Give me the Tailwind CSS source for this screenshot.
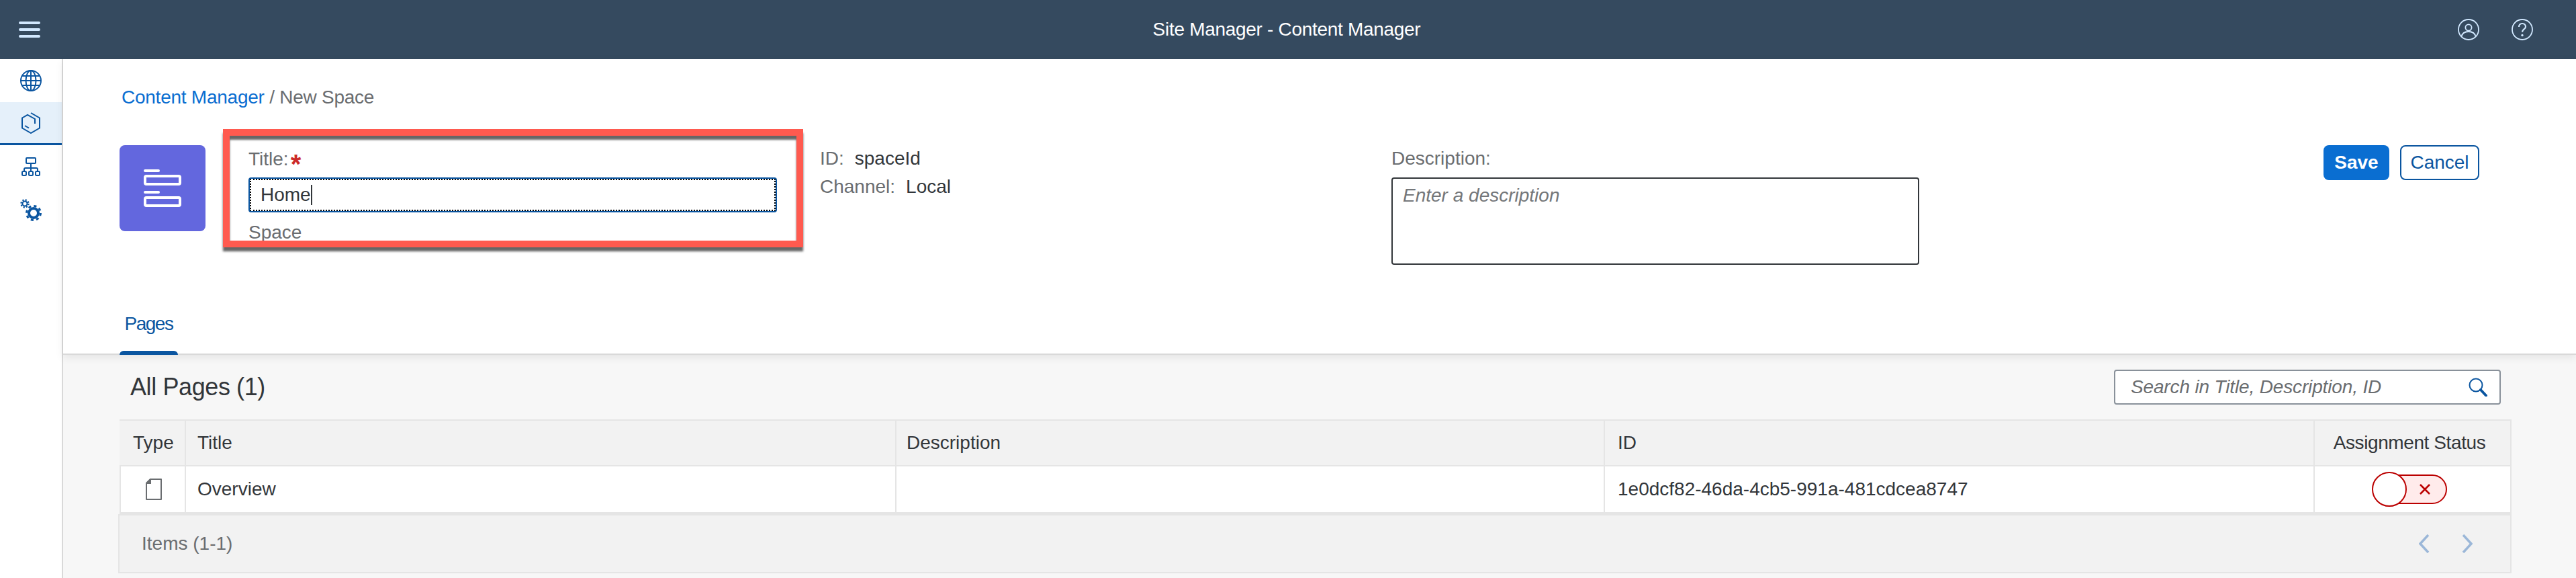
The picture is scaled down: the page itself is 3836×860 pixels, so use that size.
<!DOCTYPE html>
<html lang="en">
<head>
  <meta charset="UTF-8" />
  <title>Site Manager - Content Manager</title>
  <script src="https://cdn.jsdelivr.net/npm/@tailwindcss/browser@4"></script>
</head>
<body class="h-[860px] overflow-hidden bg-white text-[28px] leading-[36px] text-[#32363a] font-['Liberation_Sans',sans-serif]">

  <!-- shell bar -->
  <header class="h-[88px] bg-[#354a5f] flex items-center justify-between pl-[28px] pr-[64px] text-white">
    <div class="flex flex-col gap-[6px] w-[32px]">
      <span class="h-[4px] rounded-full bg-[#d1e8ff]"></span>
      <span class="h-[4px] rounded-full bg-[#d1e8ff]"></span>
      <span class="h-[4px] rounded-full bg-[#d1e8ff]"></span>
    </div>
    <div class="pl-[112px] tracking-[-0.3px]">Site Manager - Content Manager</div>
    <div class="flex gap-[48px] text-[#d1e8ff]">
      <svg class="w-[32px] h-[32px]" viewBox="0 0 32 32" fill="none" stroke="currentColor" stroke-width="1.8">
        <circle cx="16" cy="16" r="15"/>
        <circle cx="16" cy="13" r="4.6"/>
        <path d="M5.5 26.5c1-5 5-7.5 10.500-7.500s9.500 2.500 10.500 7.500"/>
      </svg>
      <svg class="w-[32px] h-[32px]" viewBox="0 0 32 32" fill="none" stroke="currentColor" stroke-width="1.8">
        <circle cx="16" cy="16" r="15"/>
        <path d="M11 12c0-3 2.200-5 5-5s5 2 5 4.700c0 3.800-5 3.800-5 8" stroke-width="2.200"/>
        <circle cx="16" cy="24.500" r="1.700" fill="currentColor" stroke="none"/>
      </svg>
    </div>
  </header>

  <div class="flex h-[772px]">
    <!-- side navigation -->
    <aside class="w-[94px] shrink-0 border-r-2 border-[#d9d9d9] text-[#0a55a0]">
      <div class="h-[64px] flex items-center justify-center">
        <svg class="w-[32px] h-[32px]" viewBox="0 0 32 32" fill="none" stroke="currentColor" stroke-width="2">
          <circle cx="16" cy="16" r="15"/>
          <ellipse cx="16" cy="16" rx="7.500" ry="15"/>
          <path d="M16 1v30M3 9h26M3 23h26M1 16h30"/>
        </svg>
      </div>
      <div class="h-[64px] flex items-center justify-center bg-[#e5f0fa] border-b-[3px] border-[#0a55a0]">
        <svg class="w-[28px] h-[32px]" viewBox="0 0 28 32" fill="none" stroke="currentColor" stroke-width="2">
          <path d="M14 1l13 7.500v15L14 31 1 23.500v-15l8-4.700 11 6.200v7"/>
          <path d="M5 20l6 3.500"/>
        </svg>
      </div>
      <div class="h-[64px] flex items-center justify-center">
        <svg class="w-[28px] h-[28px]" viewBox="0 0 28 28" fill="none" stroke="currentColor" stroke-width="2">
          <rect x="7" y="1" width="14" height="8" rx="1"/>
          <path d="M14 9v12M4 21v-3q0-2 2-2h16q2 0 2 2v3"/>
          <rect x="1" y="21" width="6" height="6" rx="1.500"/>
          <rect x="11" y="21" width="6" height="6" rx="1.500"/>
          <rect x="21" y="21" width="6" height="6" rx="1.500"/>
        </svg>
      </div>
      <div class="h-[64px] flex items-center justify-center">
        <svg class="w-[32px] h-[34px]" viewBox="0 0 32 34" fill="none" stroke="currentColor">
          <circle cx="20" cy="22" r="7" stroke-width="4"/>
          <circle cx="20" cy="22" r="10.500" stroke-width="3" stroke-dasharray="4.120 4.130"/>
          <circle cx="7" cy="8" r="3.500" stroke-width="2"/>
          <circle cx="7" cy="8" r="5.500" stroke-width="2.400" stroke-dasharray="2.160 2.160"/>
        </svg>
      </div>
    </aside>

    <main class="flex-1 flex flex-col min-w-0">
      <!-- object page header -->
      <section class="relative z-10 h-[440px] shrink-0 flex flex-col pl-[84px] pr-[144px] bg-white shadow-[inset_0_-2px_0_#d9d9d9,0_4px_12px_rgba(0,0,0,0.08)]">
        <nav class="pt-[39px] pl-[3px] tracking-[-0.25px] text-[#6a6d70]"><a class="text-[#0a6ed1]">Content Manager</a> / New Space</nav>

        <div class="flex items-start mt-[29px]">
          <div class="mt-[24px] w-[128px] h-[128px] rounded-[8px] bg-[#6367de] flex items-center justify-center shrink-0">
            <svg class="w-[56px] h-[56px]" viewBox="0 0 56 56" fill="none" stroke="#fff" stroke-width="4">
              <path d="M2 2h20M2 34h20" stroke-linecap="round"/>
              <rect x="2" y="10" width="52" height="12" rx="2"/>
              <rect x="2" y="42" width="52" height="12" rx="2"/>
            </svg>
          </div>

          <!-- highlighted title field -->
          <div class="ml-[26px] w-[864px] h-[176px] shrink-0 overflow-hidden border-[10px] border-[#ff5a4f] pl-[28px] pr-[29px] pt-[17px] text-[#6a6d70] shadow-[0_6px_3px_rgba(0,0,0,0.6),inset_0_6px_3px_rgba(0,0,0,0.6)]">
            <div class="h-[36px] flex items-start">Title:<span class="block translate-y-[7px] pl-[3px] text-[40px] leading-[36px] text-[#cc2a2a] font-bold">*</span></div>
            <div class="mt-[9px] h-[52px] flex items-center pl-[16px] rounded-[4px] border-2 border-[#0a55a0] outline-2 outline-dotted outline-black -outline-offset-4 text-[#32363a]">
              Home<span class="w-[2px] h-[30px] bg-[#32363a]"></span>
            </div>
            <div class="mt-[12px]">Space</div>
          </div>

          <div class="ml-[25px] w-[851px] shrink-0 pt-[26px] flex flex-col gap-[6px] text-[#6a6d70]">
            <div>ID:<span class="pl-[16px] text-[#32363a]">spaceId</span></div>
            <div>Channel:<span class="pl-[16px] text-[#32363a]">Local</span></div>
          </div>

          <div class="w-[786px] shrink-0 pt-[26px] text-[#6a6d70]">
            <div>Description:</div>
            <div class="mt-[10px] h-[130px] rounded-[4px] border-2 border-[#32363a] pl-[15px] pt-[7px] italic text-[#74777a]">Enter a description</div>
          </div>

          <div class="ml-auto mt-[24px] flex gap-[16px]">
            <button class="w-[98px] h-[52px] rounded-[8px] bg-[#0a6ed1] text-white font-bold">Save</button>
            <button class="w-[118px] h-[52px] rounded-[8px] border-2 border-[#0a55a0] text-[#0a55a0]">Cancel</button>
          </div>
        </div>

        <div class="mt-auto w-[87px] text-[#0a55a0]">
          <div class="text-center pb-[22px] tracking-[-1.500px]">Pages</div>
          <div class="h-[6px] rounded-t-[6px] bg-[#0a55a0]"></div>
        </div>
      </section>

      <!-- pages table -->
      <section class="flex-1 bg-[#f7f7f7] pl-[84px] pr-[96px] pt-[22px]">
        <div class="flex items-center justify-between pl-[16px] pr-[16px]">
          <h2 class="text-[36px] leading-[44px] tracking-[-0.4px]">All Pages (1)</h2>
          <div class="w-[576px] h-[52px] flex items-center justify-between rounded-[4px] border-2 border-[#89919a] bg-white pl-[23px] pr-[18px]">
            <span class="italic tracking-[-0.15px] text-[#6a6d70]">Search in Title, Description, ID</span>
            <svg class="w-[28px] h-[28px]" viewBox="0 0 28 28" fill="none" stroke="#0a55a0">
              <circle cx="11" cy="11" r="9.500" stroke-width="2"/>
              <path d="M18 18l8 8.500" stroke-width="4" stroke-linecap="round"/>
            </svg>
          </div>
        </div>

        <div class="mt-[22px] grid grid-cols-[99px_1058px_1055px_1057px_1fr] border-t-2 border-[#e5e5e5]">
          <div class="h-[68px] flex items-center pl-[20px] bg-[#f2f2f2] border-r-2 border-b-2 border-[#e5e5e5]">Type</div>
          <div class="h-[68px] flex items-center pl-[17px] bg-[#f2f2f2] border-r-2 border-b-2 border-[#e5e5e5]">Title</div>
          <div class="h-[68px] flex items-center pl-[15px] bg-[#f2f2f2] border-r-2 border-b-2 border-[#e5e5e5]">Description</div>
          <div class="h-[68px] flex items-center pl-[19px] bg-[#f2f2f2] border-r-2 border-b-2 border-[#e5e5e5]">ID</div>
          <div class="h-[68px] flex items-center justify-center pr-[9px] bg-[#f2f2f2] border-r-2 border-b-2 border-[#e5e5e5] tracking-[-0.4px]">Assignment Status</div>

          <div class="h-[71px] flex items-center pl-[37px] bg-white border-l-2 border-r-2 border-b-[3px] border-[#e5e5e5]">
            <svg class="w-[24px] h-[32px]" viewBox="0 0 24 32" fill="none" stroke="#6a6d70" stroke-width="2">
              <path d="M7 1h16v30H1V7z" stroke-linejoin="round"/>
              <path d="M7 1v6H1z" fill="#6a6d70"/>
            </svg>
          </div>
          <div class="h-[71px] flex items-center pl-[17px] bg-white border-r-2 border-b-[3px] border-[#e5e5e5]">Overview</div>
          <div class="h-[71px] bg-white border-r-2 border-b-[3px] border-[#e5e5e5]"></div>
          <div class="h-[71px] flex items-center pl-[19px] bg-white border-r-2 border-b-[3px] border-[#e5e5e5]">1e0dcf82-46da-4cb5-991a-481cdcea8747</div>
          <div class="h-[71px] flex items-center pl-[85px] bg-white border-r-2 border-b-[3px] border-[#e5e5e5]">
            <div class="relative z-10 w-[52px] h-[52px] shrink-0 rounded-full border-2 border-[#bb0000] bg-white"></div>
            <div class="-ml-[20px] w-[80px] h-[44px] rounded-r-full border-2 border-[#bb0000] bg-[#ffebeb] flex items-center justify-center pl-[14px]">
              <svg class="w-[16px] h-[16px]" viewBox="0 0 16 16" fill="none" stroke="#bb0000" stroke-width="2.500"><path d="M1 1l14 14M15 1 1 15"/></svg>
            </div>
          </div>
        </div>

        <div class="-ml-[2px] h-[88px] flex items-center justify-between pl-[33px] pr-[56px] bg-[#f2f2f2] border-2 border-[#e5e5e5] text-[#6a6d70]">
          <span>Items (1-1)</span>
          <div class="flex gap-[48px]">
            <svg class="w-[16px] h-[28px]" viewBox="0 0 16 28" fill="none" stroke="#9bb7d8" stroke-width="3.500"><path d="M14 1 2 14l12 13"/></svg>
            <svg class="w-[16px] h-[28px]" viewBox="0 0 16 28" fill="none" stroke="#9bb7d8" stroke-width="3.500"><path d="M2 1l12 13L2 27"/></svg>
          </div>
        </div>
      </section>
    </main>
  </div>
</body>
</html>
